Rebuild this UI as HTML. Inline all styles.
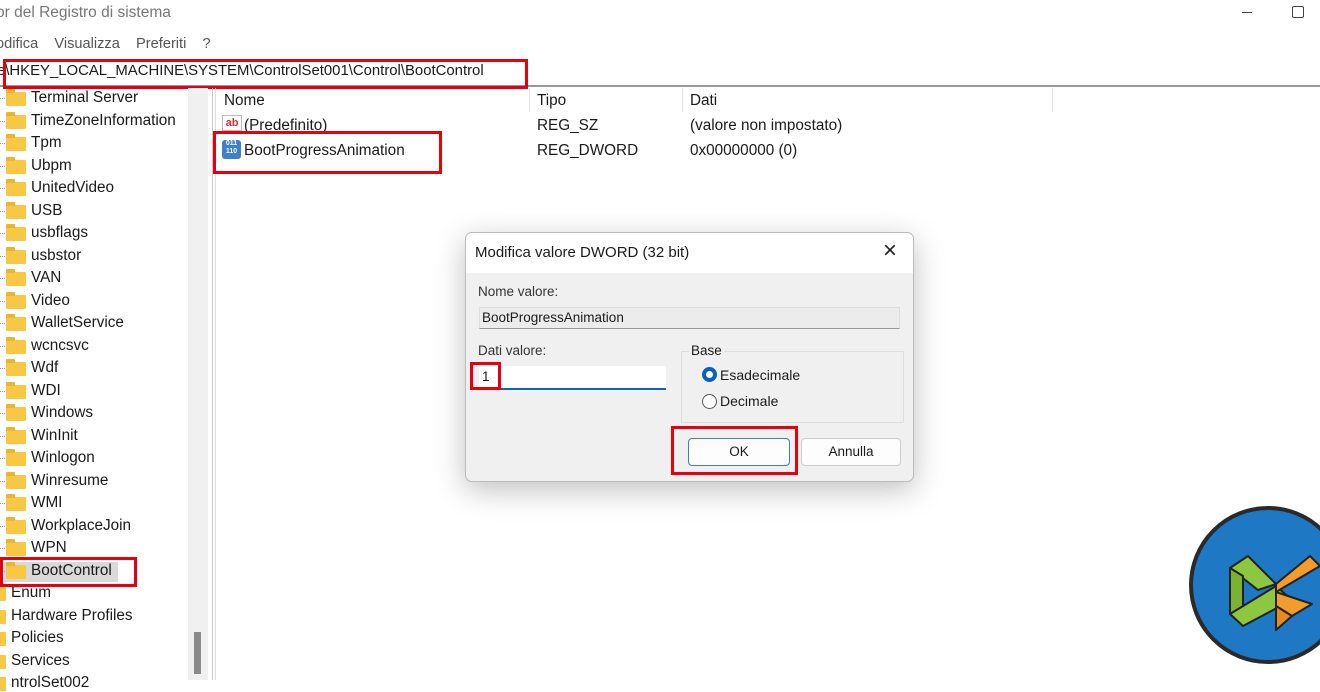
<!DOCTYPE html><html><head><style>
body{margin:0;width:1320px;height:680px;overflow:hidden;background:#fff;font-family:"Liberation Sans",sans-serif;color:#1a1a1a;position:relative}
.a{position:absolute;white-space:nowrap}
.f{position:absolute;width:20px;height:14px;background:#f8c845;border-radius:1px}
.f:before{content:"";position:absolute;left:0;top:-3px;width:9px;height:4px;background:#eab530;border-radius:1px 1px 0 0}
.t{font-size:15.3px}
.red{position:absolute;border:3px solid #e8000e;box-sizing:border-box}
</style></head><body>
<div class="a" style="left:-4px;top:4px;font-size:15.5px;color:#777">or del Registro di sistema</div>
<div class="a" style="left:1242px;top:12px;width:10px;height:1px;background:#444"></div>
<div class="a" style="left:1292px;top:6px;width:10px;height:10px;border:1px solid #444;border-radius:2px"></div>
<div class="a" style="left:-4px;top:36px;font-size:14.6px;color:#555">odifica&nbsp;&nbsp;&nbsp;&nbsp;Visualizza&nbsp;&nbsp;&nbsp;&nbsp;Preferiti&nbsp;&nbsp;&nbsp;&nbsp;?</div>
<div class="a" style="left:0;top:58px;width:1320px;height:27px;border-bottom:2px solid #999"></div>
<div class="a" style="left:-3px;top:63px;font-size:14.9px">e\HKEY_LOCAL_MACHINE\SYSTEM\ControlSet001\Control\BootControl</div>
<div class="red" style="left:3px;top:59px;width:525px;height:30px"></div>
<!-- left pane -->
<div class="a" style="left:188px;top:88px;width:20px;height:592px;background:#f0f0f0"></div>
<div class="a" style="left:194px;top:632px;width:7px;height:42px;background:#8a8a8a"></div>
<div class="a" style="left:212px;top:88px;width:1px;height:592px;background:#ccc"></div>
<div class="a" style="left:215px;top:88px;width:1px;height:592px;background:#ddd"></div>
<div class="a" style="left:4px;top:562px;width:114px;height:20px;background:#d9d9d9"></div>
<div id="tree"></div>
<div class="red" style="left:0;top:557px;width:137px;height:30px"></div>
<!-- right pane -->
<div class="a t" style="left:224px;top:92px">Nome</div>
<div class="a t" style="left:537px;top:92px">Tipo</div>
<div class="a t" style="left:690px;top:92px">Dati</div>
<div class="a" style="left:529px;top:88px;width:1px;height:24px;background:#e5e5e5"></div>
<div class="a" style="left:682px;top:88px;width:1px;height:24px;background:#e5e5e5"></div>
<div class="a" style="left:1052px;top:88px;width:1px;height:24px;background:#e5e5e5"></div>
<div class="a" style="left:222px;top:115px;width:20px;height:16px;border:1px solid #bbb;font-size:11px;font-weight:bold;color:#d33;line-height:14px;text-align:center;box-sizing:border-box">ab</div>
<div class="a t" style="left:244px;top:117px">(Predefinito)</div>
<div class="a t" style="left:537px;top:117px">REG_SZ</div>
<div class="a t" style="left:690px;top:117px">(valore non impostato)</div>
<div class="a" style="left:222px;top:140px;width:19px;height:19px;background:#3d7fd0;border-radius:3px;color:#fff;font-size:7px;line-height:8px;text-align:center;font-weight:bold">011<br>110</div>
<div class="a t" style="left:244px;top:142px">BootProgressAnimation</div>
<div class="a t" style="left:537px;top:142px">REG_DWORD</div>
<div class="a t" style="left:690px;top:142px">0x00000000 (0)</div>
<div class="red" style="left:213px;top:131px;width:229px;height:43px"></div>
<!-- dialog -->
<div class="a" style="left:465px;top:232px;width:447px;height:248px;background:#f0f0f0;border:1px solid #bbb;border-radius:7px;box-shadow:0 8px 30px rgba(0,0,0,.25);overflow:hidden">
<div style="position:absolute;left:0;top:0;width:100%;height:40px;background:#fff"></div>
<div class="a" style="left:9px;top:11px;font-size:15px">Modifica valore DWORD (32 bit)</div>
<div class="a" style="left:417px;top:4px;font-size:24px;color:#222">×</div>
<div class="a" style="left:12px;top:51px;font-size:13.5px;color:#333">Nome valore:</div>
<div class="a" style="left:13px;top:74px;width:421px;height:22px;background:#ececec;border:1px solid #ddd;border-bottom:1px solid #999;box-sizing:border-box"></div>
<div class="a" style="left:16px;top:77px;font-size:13.5px">BootProgressAnimation</div>
<div class="a" style="left:12px;top:110px;font-size:13.5px;color:#333">Dati valore:</div>
<div class="a" style="left:13px;top:133px;width:187px;height:24px;background:#fff;border-bottom:2px solid #0a64c0;box-sizing:border-box"></div>
<div class="a" style="left:16px;top:136px;font-size:13.5px">1</div>
<div class="a" style="left:215px;top:118px;width:221px;height:70px;border:1px solid #ddd"></div>
<div class="a" style="left:223px;top:110px;font-size:13.5px;background:#f0f0f0;padding:0 2px">Base</div>
<div class="a" style="left:236px;top:134px;width:7px;height:7px;border:4px solid #0a5fbf;border-radius:50%;background:#fff"></div>
<div class="a" style="left:254px;top:134px;font-size:14px">Esadecimale</div>
<div class="a" style="left:236px;top:161px;width:15px;height:15px;border:1px solid #555;border-radius:50%;box-sizing:border-box;background:#fff"></div>
<div class="a" style="left:254px;top:160px;font-size:14px">Decimale</div>
<div class="a" style="left:222px;top:205px;width:100px;height:26px;background:#fdfdfd;border:1px solid #3b7ed0;border-radius:4px;font-size:13.5px;text-align:center;line-height:26px">OK</div>
<div class="a" style="left:335px;top:205px;width:98px;height:26px;background:#fdfdfd;border:1px solid #ccc;border-radius:4px;font-size:13.5px;text-align:center;line-height:26px">Annulla</div>
</div>
<div class="red" style="left:470px;top:362px;width:31px;height:28px"></div>
<div class="red" style="left:671px;top:426px;width:127px;height:49px"></div>
<!-- logo -->
<svg class="a" style="left:1188px;top:506px" width="140" height="160" viewBox="0 0 140 160">
<circle cx="80" cy="79" r="77" fill="#1f78c3" stroke="#2a2a2a" stroke-width="4"/>
<g stroke="#222" stroke-width="2" stroke-linejoin="round">
<path d="M42 62 L60 50 L88 78 L70 84 Z" fill="#8dc63f"/>
<path d="M42 62 L55 70 L55 112 L42 108 Z" fill="#7ab233"/>
<path d="M42 108 L88 80 L104 94 L55 120 Z" fill="#8dc63f"/>
<path d="M88 78 L122 50 L132 60 L88 86 Z" fill="#f39c2c"/>
<path d="M88 86 L124 98 L104 110 L88 100 Z" fill="#f39c2c"/>
<path d="M88 100 L104 110 L88 124 Z" fill="#e88a1c"/>
</g>
</svg>
<script>
var n=["Terminal Server","TimeZoneInformation","Tpm","Ubpm","UnitedVideo","USB","usbflags","usbstor","VAN","Video","WalletService","wcncsvc","Wdf","WDI","Windows","WinInit","Winlogon","Winresume","WMI","WorkplaceJoin","WPN","BootControl"],h="";
n.forEach(function(s,i){var y=89+i*22.5;h+='<div class="a" style="left:0;top:'+(y+9)+'px;width:5px;height:1px;border-top:1px dotted #999"></div><div class="f" style="left:6px;top:'+(y+3)+'px"></div><div class="a t" style="left:31px;top:'+y+'px">'+s+'</div>';});
["Enum","Hardware Profiles","Policies","Services","ntrolSet002"].forEach(function(s,i){var y=584+i*22.5;h+='<div class="f" style="left:-14px;top:'+(y+3)+'px"></div><div class="a t" style="left:11px;top:'+y+'px">'+s+'</div>';});
document.getElementById("tree").innerHTML=h;
</script>
</body></html>
